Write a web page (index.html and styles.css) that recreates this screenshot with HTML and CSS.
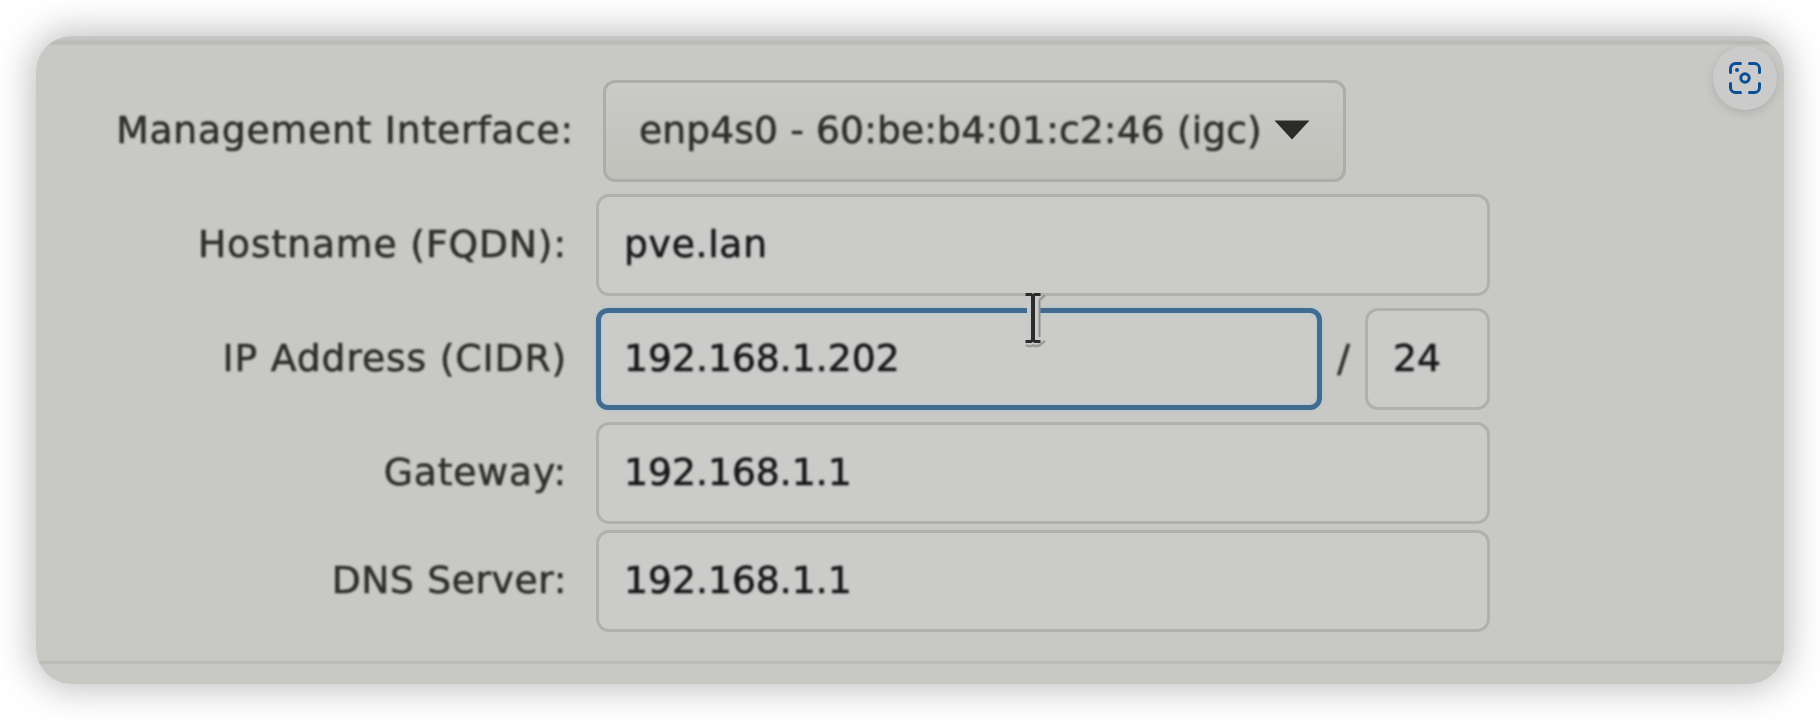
FILE: index.html
```
<!DOCTYPE html>
<html lang="en">
<head>
<meta charset="utf-8">
<title>Network Configuration</title>
<link rel="stylesheet" href="styles.css">
</head>
<body>
<main class="card">
  <form class="form">
    <div class="row row-select">
      <label class="label"><span class="t mgmt">Management Interface:</span></label>
      <div class="select"><span class="t iface">enp4s0 - 60:be:b4:01:c2:46 (igc)</span>
        <svg class="arrow" width="36" height="20" viewBox="0 0 36 20"><path d="M0.5 0.5H35.5L18 19.5Z" fill="#2b2c2a"/></svg>
      </div>
    </div>
    <div class="row">
      <label class="label"><span class="t">Hostname (FQDN):</span></label>
      <div class="field"><span class="t host">pve.lan</span></div>
    </div>
    <div class="row">
      <label class="label"><span class="t">IP Address (CIDR)</span></label>
      <div class="field focused"><span class="t">192.168.1.202</span></div>
      <span class="slash"><span class="t">/</span></span>
      <div class="field mask"><span class="t">24</span></div>
    </div>
    <div class="row">
      <label class="label"><span class="t">Gateway:</span></label>
      <div class="field"><span class="t">192.168.1.1</span></div>
    </div>
    <div class="row row-last">
      <label class="label"><span class="t">DNS Server:</span></label>
      <div class="field"><span class="t">192.168.1.1</span></div>
    </div>
  </form>
  <button class="lens" type="button" aria-label="Visual search">
    <svg width="34" height="34" viewBox="0 0 34 34" fill="none" stroke="#0b4f96" stroke-width="3" stroke-linecap="round">
      <path d="M2.500 11.500V7.500a5 5 0 0 1 5-5H12.500M21.500 2.500H26.500a5 5 0 0 1 5 5V11.500M31.500 22.500V26.500a5 5 0 0 1-5 5H21.500M12.500 31.500H7.500a5 5 0 0 1-5-5V22.500"/>
      <circle cx="17" cy="17" r="4.200"/>
      <circle cx="9" cy="9" r="2" fill="#0b4f96" stroke="none"/>
    </svg>
  </button>
  <svg class="cursor" width="24" height="58" viewBox="0 0 24 58" fill="none">
    <path d="M15 8H18L22 4M3 54Q6 56 10 54.500Q16 56 18 53L22 50" stroke="#9a9b99" stroke-width="2.500"/>
    <path d="M10 5V49" stroke="#c8cac9" stroke-width="12"/>
    <path d="M16.500 9V46" stroke="#8f908e" stroke-width="2"/>
    <path d="M2.500 3.500H8L10 5L12 3.500H17.500M2.500 50.500H8L10 49L12 50.500H17.500" stroke="#2c2d2b" stroke-width="3"/>
    <path d="M10 4V50" stroke="#2c2d2b" stroke-width="4"/>
  </svg>
</main>
</body>
</html>
```
FILE: styles.css
```
* { box-sizing: border-box; }

body {
  margin: 0;
  padding: 36px;
  height: 720px;
  overflow: hidden;
  background: #fff;
  font-family: "DejaVu Sans", sans-serif;
  font-size: 37.7px;
  line-height: 44px;
  color: #2e2f2d;
}

.card {
  position: relative;
  width: 1748px;
  height: 648px;
  padding-top: 44px;
  border-radius: 36px;
  background:
    linear-gradient(#c8c8c6 0, #c2c2c0 4px, #b8b8b4 6px, #b9b9b5 7px, #c8c9c4 10px) 0 0 / 100% 10px no-repeat,
    linear-gradient(#c8c9c4, #b9bab4 2px, #b9bab4 3px, #c8c9c4 5px) 0 624px / 100% 5px no-repeat,
    #c8c9c4;
  box-shadow: 0 0 36px 5px rgba(0, 0, 0, .25);
}

.form {
  display: flex;
  flex-direction: column;
  gap: 12px;
}

.row {
  display: flex;
  width: 1454px;
  height: 102px;
}

.row-last { margin-top: -6px; }

.label,
.slash,
.select,
.field {
  display: flex;
  align-items: center;
  padding-bottom: 2px;
  white-space: nowrap;
}

.t {
  filter: blur(.8px);
  -webkit-text-stroke: .6px currentColor;
}

.label {
  flex: none;
  width: 531px;
  margin-right: 29px;
  justify-content: flex-end;
  letter-spacing: .86px;
}

.row-select .label {
  width: 538px;
  margin-right: 29px;
  letter-spacing: .77px;
}

.row-last .label { letter-spacing: .6px; }

.host { letter-spacing: .7px; }

.iface { letter-spacing: .1px; }

.field {
  flex: 1;
  padding-left: 25px;
  border: 3px solid #b0b1ae;
  border-radius: 13px;
  background: #cbcbca;
  color: #171817;
}

.field.focused {
  flex: none;
  width: 726px;
  padding-left: 23px;
  border: 5px solid #426b92;
  border-radius: 12px;
  box-shadow: 0 0 3px 1px #b4c5cb, inset 0 0 4px 1px #b9cbd0;
}

.slash {
  width: 43px;
  justify-content: center;
}

.field.mask { padding-left: 25px; }

.select {
  width: 743px;
  padding-left: 33px;
  padding-right: 33px;
  justify-content: space-between;
  border: 3px solid #acada9;
  border-radius: 12px;
  background: linear-gradient(#cacbc6, #c1c1bc);
}

.arrow { filter: blur(.5px); }

.lens {
  position: absolute;
  top: 10px;
  right: 7px;
  display: grid;
  place-items: center;
  width: 64px;
  height: 64px;
  padding: 0;
  border: 0;
  border-radius: 50%;
  background: #cacbca;
  box-shadow: 0 3px 10px rgba(0, 0, 0, .13);
}

.cursor {
  position: absolute;
  left: 987px;
  top: 255px;
  filter: blur(.5px);
}
```
